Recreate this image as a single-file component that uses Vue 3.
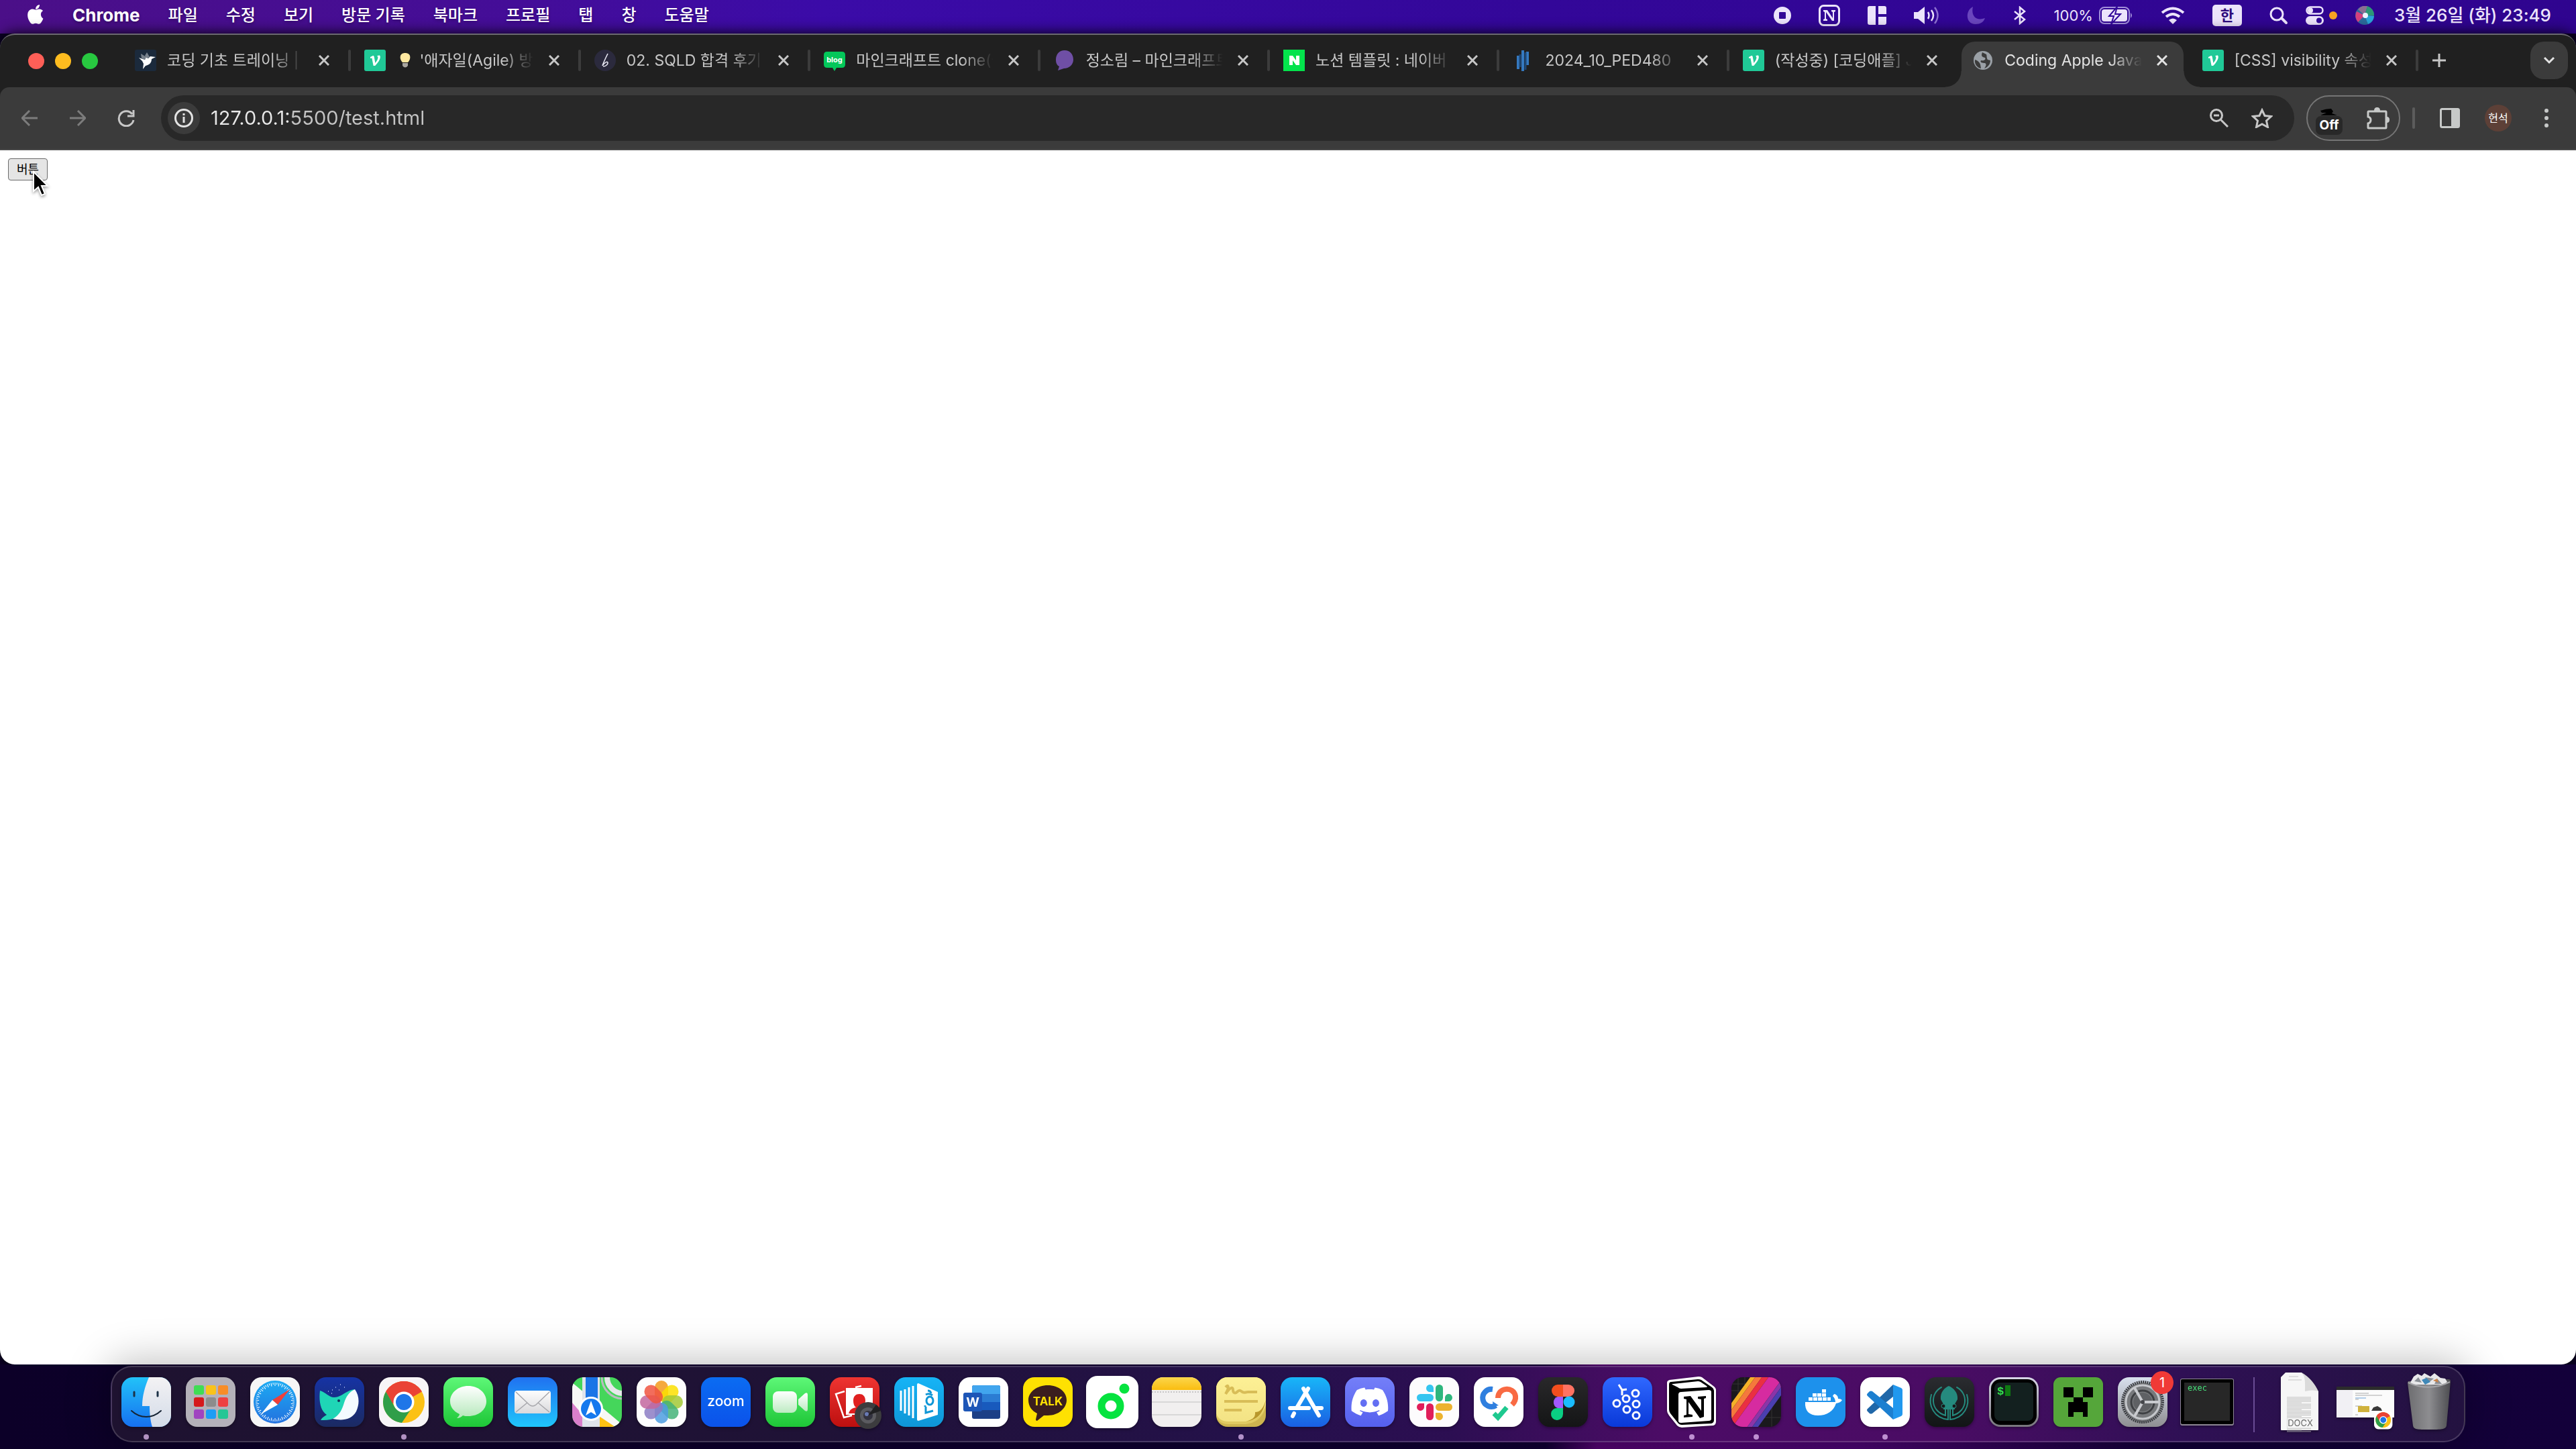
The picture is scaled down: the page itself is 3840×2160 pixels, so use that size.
<script setup>
import { ref } from 'vue'

const menus = ['파일', '수정', '보기', '방문 기록', '북마크', '프로필', '탭', '창', '도움말']

const velog = '<rect width="32" height="32" rx="3" fill="#20c997"/><path d="M9 11l4-2c1 0 1.500.6 1.800 2l1.600 9c2.600-3.500 4-6 4-8 0-1-.4-1.600-1-2.200l.2-.8 3.200-.4c.8.7 1 1.500 1 2.400 0 3.500-3.200 8.500-7.600 13h-2.600L11.400 12.500 9 13z" fill="#fff"/>'

const favicons = {
  bird: '<rect width="32" height="32" rx="3" fill="#1b2a3c"/><path d="M6 12l9 3 2-5 3 3 3-3 8 1-6 3c0 6-4 9-9 10l-4 5 1-8-2-4z" fill="#fff"/><path d="M9 6l8 5-2 4-5-2zM18 4l4 7-4 2-3-4z" fill="#77818c"/>',
  velog,
  pen: '<circle cx="16" cy="16" r="16" fill="#2b2a3d"/><path d="M20 6c-2 4-6 12-8 18M12 24c4-6 8-7 8-4 0 2-3 5-7 5" fill="none" stroke="#e7e7f2" stroke-width="1.600"/>',
  blog: '<path d="M5 3h22q5 0 5 5v14q0 5-5 5h-8l-3 5-3-5H5q-5 0-5-5V8q0-5 5-5z" fill="#03c75a"/><text x="16" y="19" text-anchor="middle" font-family="Inter, sans-serif" font-size="11" font-weight="700" fill="#fff">blog</text>',
  speech: '<path d="M16 1c8 0 13 6 13 14 0 7-6 13-14 13l-9 3 2-6C4 23 3 19 3 15 3 7 8 1 16 1z" fill="#6f4fa5"/>',
  naver: '<rect width="32" height="32" fill="#03e34c"/><path d="M9 9h5l5 7V9h5v14h-5l-5-7v7H9z" fill="#fff"/>',
  bars: '<path d="M8 9v20M15 1v31M22 3v20" stroke="#3579c0" stroke-width="4"/><path d="M11 7v19M19 4v26" stroke="#1d4674" stroke-width="3"/>',
  globe: '<circle cx="16" cy="16" r="14" fill="#9aa0a6"/><path d="M15 4c-2 5-1 7 4 8 2 3-2 5-6 4-2 3 2 4 6 4 3 2 1 5-1 8 5-2 9-6 9-12l-4-1c-2-3-1-6-2-8zM4 15c4 1 7 4 8 7l1 6C7 27 3 21 4 15z" fill="#3b3b3b"/>'
}

const tabs = [
  { icon: 'bird', title: '코딩 기초 트레이닝 | 프로그래머스' },
  { icon: 'velog', bulb: true, title: "'애자일(Agile) 방법론" },
  { icon: 'pen', title: '02. SQLD 합격 후기 모음' },
  { icon: 'blog', title: '마인크래프트 clone(클론)' },
  { icon: 'speech', title: '정소림 – 마인크래프트' },
  { icon: 'naver', title: '노션 템플릿 : 네이버 검색' },
  { icon: 'bars', title: '2024_10_PED480' },
  { icon: 'velog', title: '(작성중) [코딩애플] JS' },
  { icon: 'globe', title: 'Coding Apple JavaScript', active: true },
  { icon: 'velog', title: '[CSS] visibility 속성' }
]

const address = ref('127.0.0.1:5500/test.html')

// Standard rounded tile that most dock icons sit on.
const tile = (fill) => `<rect width="74" height="74" rx="17" fill="${fill}"/>`
const grad = (id, top, bottom) =>
  `<linearGradient id="${id}" x1="0" y1="0" x2="0" y2="1"><stop offset="0" stop-color="${top}"/><stop offset="1" stop-color="${bottom}"/></linearGradient>`
const clip = (id) => `<clipPath id="${id}"><rect width="74" height="74" rx="17"/></clipPath>`

const launchColors = ['#3fdc54', '#f9c21a', '#f88d28', '#d5191c', '#8c8c8c', '#ee4141', '#a044c0', '#1d9df5', '#25c695']
const launchpad = launchColors
  .map((c, i) => `<rect x="${12 + (i % 3) * 18}" y="${12 + Math.floor(i / 3) * 18}" width="15" height="14" rx="3" fill="${c}"/>`)
  .join('')

const ticks = Array.from({ length: 60 }, (_, i) => `<path d="M37 8v${i % 2 ? 3 : 5}" stroke="#fff" stroke-width="1" transform="rotate(${i * 6} 37 37)"/>`).join('')

const petalColors = ['#f39a1c', '#fbdf00', '#a3c936', '#44b378', '#4e9de0', '#8c7cc4', '#c3679f', '#f0533f']
const petals = petalColors
  .map((c, i) => `<rect x="27" y="5" width="20" height="31" rx="10" fill="${c}" fill-opacity=".85" transform="rotate(${i * 45} 37 37)"/>`)
  .join('')

const chromeMark = '<circle cx="37" cy="37" r="31" fill="#fbc116"/><path d="M37 37L10.200 21.500A31 31 0 0 1 63.800 21.500z" fill="#ea4335"/><path d="M37 21.500h26.800A31 31 0 0 0 10.200 21.500L20 40z" fill="#ea4335"/><path d="M10.200 21.500A31 31 0 0 0 34 67.900L50 44 37 37 23.600 44.700z" fill="#2f9e49"/><circle cx="37" cy="37" r="15.500" fill="#fff"/><circle cx="37" cy="37" r="12" fill="#1f76e8"/>'

const kafka = [[35, 32], [49, 24], [21, 39], [50, 40], [36, 48], [50, 57]]
  .map(([x, y]) => `<circle cx="${x}" cy="${y}" r="5" fill="none" stroke="#fff" stroke-width="3"/>`)
  .join('')

const gearTeeth = '<circle cx="37" cy="37" r="30" fill="none" stroke="#3a3c40" stroke-width="4" stroke-dasharray="2 1.140"/>'

const textLines = Array.from({ length: 26 }, (_, i) => `<path d="M11 ${44 + i * 3}h${i % 5 === 4 ? 22 : 36}" stroke="#b9b9b9" stroke-width="1"/>`).join('')

const apps = [
  { name: 'Finder', running: true, art: `<defs>${grad('finderL', '#22c2f8', '#1670f0')}${grad('finderR', '#f3f2f4', '#d3dbe8')}${clip('finderC')}</defs><g clip-path="url(#finderC)"><rect width="74" height="74" fill="url(#finderL)"/><path d="M41 0C35 14 31 28 31 43h11c0 10 1 22 4 31h28V0z" fill="url(#finderR)"/></g><path d="M19 22v6M54 22v6" stroke="#1d3247" stroke-width="3" stroke-linecap="round"/><path d="M15 50c13 12 31 12 44 0" fill="none" stroke="#162434" stroke-width="2" stroke-linecap="round"/>` },
  { name: 'Launchpad', art: tile('#b4b1b9') + launchpad },
  { name: 'Safari', art: `<defs>${grad('safari', '#1cabf3', '#2372df')}</defs>${tile('#f6f6f6')}<circle cx="37" cy="37" r="32" fill="url(#safari)"/>${ticks}<path d="M59 18L33 34l8 7z" fill="#ee3f3a"/><path d="M16 55l17-21 8 7z" fill="#fff"/>` },
  { name: 'Whale', art: `<defs>${grad('whale', '#1633a4', '#1b2a62')}</defs>${tile('url(#whale)')}<path d="M8 20c8 2 13 10 21 10 12 0 18-11 31-12-9 10-10 22-17 32-6 9-15 15-34 14 2-4 6-6 9-8C9 50 6 36 8 20z" fill="#1fd6b6"/><path d="M60 18c7 10 7 22 2 33-7 13-22 14-35 11 10-5 14-14 17-24 3-9 7-16 16-20z" fill="#f4fbff"/><circle cx="36" cy="35" r="2" fill="#12305c"/><path d="M26 19h1M31 15h1M38 11h1M44 15h1M20 21h1M25 24h1M36 19h1" stroke="#b9c3f5" stroke-width="1.500"/>` },
  { name: 'Chrome', running: true, art: tile('#f7f5f7') + chromeMark },
  { name: 'Messages', art: `<defs>${grad('msg', '#5df777', '#1ec637')}${grad('msgB', '#ffffff', '#b4e8ba')}</defs>${tile('url(#msg)')}<path d="M37 13c15 0 27 10 27 23S52 58 37 58c-3 0-6 0-8-1-2 2-5 4-9 4 2-2 4-4 4-6C15 51 10 44 10 36c0-13 12-23 27-23z" fill="url(#msgB)"/>` },
  { name: 'Mail', art: `<defs>${grad('mail', '#2071f0', '#20c6fb')}${grad('mailE', '#fdfdfd', '#d9d9dc')}</defs>${tile('url(#mail)')}<rect x="10" y="20" width="54" height="34" rx="4" fill="url(#mailE)"/><path d="M12 22l20 19q5 4 10 0l20-19M12 52l17-14M62 52L45 38" fill="none" stroke="#a6a6ab" stroke-width="1.500"/>` },
  { name: 'Maps', art: `<defs>${clip('mapsC')}</defs><g clip-path="url(#mapsC)"><rect width="74" height="74" fill="#45d65b"/><path d="M0 22l22 20v32H0z" fill="#d97fcb"/><path d="M0 8l74 62v14H40L0 38z" fill="#f7f7f5"/><path d="M40 58l24 16H38z" fill="#fcc112"/><circle cx="76" cy="0" r="32" fill="none" stroke="#b9bcc0" stroke-width="3"/><circle cx="76" cy="0" r="24" fill="none" stroke="#e6e8ea" stroke-width="8"/><path d="M15 0v74h26V0z" fill="#dfe3ea"/><path d="M20 0v40h18V0z" fill="#1a74e6"/></g><circle cx="28" cy="47" r="18" fill="#fff"/><circle cx="28" cy="47" r="15" fill="#1579ee"/><path d="M28 35l8 22-8-5-8 5z" fill="#fff"/>` },
  { name: 'Photos', art: tile('#fdfdfd') + petals },
  { name: 'Zoom', art: `<defs>${grad('zoom', '#0b6cf2', '#0b52ea')}</defs>${tile('url(#zoom)')}<text x="37" y="43" text-anchor="middle" font-family="Inter, sans-serif" font-size="21" font-weight="500" fill="#fff">zoom</text>` },
  { name: 'FaceTime', art: `<defs>${grad('ft', '#5df777', '#1ec637')}${grad('ftB', '#ffffff', '#bdebc2')}</defs>${tile('url(#ft)')}<rect x="11" y="21" width="36" height="32" rx="8" fill="url(#ftB)"/><path d="M49 33l10-9q4-2 4 2v22q0 4-4 2l-10-9z" fill="url(#ftB)"/>` },
  { name: 'Photo Booth', art: `<defs>${grad('pb', '#ee3431', '#bd0f0f')}</defs>${tile('url(#pb)')}<path d="M22 21L9 25l12 35 12-3M38 15l9-2" fill="none" stroke="#fff" stroke-width="2.500"/><rect x="24" y="16" width="40" height="40" fill="#fff"/><path d="M28 54c2-6 5-8 11-9-3-2-4-6-4-10 0-7 4-10 9-10s9 3 9 10c0 4-2 8-4 10 6 1 9 3 11 9z" fill="#e02020"/><circle cx="57" cy="57" r="20" fill="#3c3c3e"/><circle cx="57" cy="57" r="12" fill="#5b5b60"/><circle cx="57" cy="57" r="7" fill="#33323f"/><circle cx="55" cy="55" r="3" fill="#697ab4"/><path d="M57 57l12-16q5 3 7 9z" fill="#202022"/>` },
  { name: 'Books', art: `<defs>${grad('bk', '#16b4f6', '#0f96d6')}</defs>${tile('url(#bk)')}<path d="M10 20v30M16 18v36M22 15v42M28 13v48" stroke="#fff" stroke-width="3"/><path d="M36 9l29 13v34L36 65q-2 0-2-2V11q0-2 2-2z" fill="#fff"/><path d="M47 44v9l11-3M46 42v2" stroke="#0f96d6" stroke-width="3" fill="none"/><ellipse cx="53" cy="35" rx="5" ry="6" fill="none" stroke="#0f96d6" stroke-width="3"/><path d="M47 26q5-3 10 1M50 20q4 0 5 4" stroke="#0f96d6" stroke-width="3" fill="none"/>` },
  { name: 'Word', art: `${tile('#fff')}<rect x="20" y="12" width="42" height="50" rx="3" fill="#1c3f86"/><path d="M23 12h36q3 0 3 3v10H20V15q0-3 3-3z" fill="#41a5ee"/><path d="M20 25h42v12H20z" fill="#2b7cd3"/><path d="M20 37h42v12H20z" fill="#185abd"/><rect x="7" y="23" width="28" height="28" rx="3" fill="#1d56b7"/><text x="21" y="44" text-anchor="middle" font-family="Inter, sans-serif" font-size="19" font-weight="700" fill="#fff">W</text>` },
  { name: 'KakaoTalk', art: `${tile('#fee102')}<path d="M37 12c16 0 28 10 28 22S53 57 37 57h-6l-10 8q-2 0-2-2l2-9C13 50 8 43 8 34c0-12 13-22 29-22z" fill="#3b1e1e"/><text x="37" y="42" text-anchor="middle" font-family="Inter, sans-serif" font-size="17" font-weight="700" fill="#fee102">TALK</text>` },
  { name: 'Cloud', art: `<rect x="-2" y="-2" width="78" height="78" rx="17" fill="#fff"/><circle cx="35" cy="43" r="14" fill="none" stroke="#06e33f" stroke-width="11"/><circle cx="55" cy="17" r="7.500" fill="#06e33f"/>` },
  { name: 'Notes', art: `<defs>${clip('noteC')}${grad('noteT', '#fbd64c', '#fabd10')}</defs><g clip-path="url(#noteC)"><rect width="74" height="74" fill="#f1efef"/><rect width="74" height="19" fill="url(#noteT)"/></g><path d="M0 22h74" stroke="#9c9c9c" stroke-width="1" stroke-dasharray="2 2"/><path d="M0 37h74M0 56h74" stroke="#cfcfcf" stroke-width="1.500"/>` },
  { name: 'Stickies', running: true, art: `<defs>${clip('stC')}${grad('st', '#fdf095', '#f3e385')}</defs><g clip-path="url(#stC)"><rect width="74" height="74" fill="#cdb44f"/><path d="M0 0h74v44C68 62 58 68 44 70H18Q4 70 0 58z" fill="#e0ca62"/><path d="M0 0h74v40C68 58 58 65 44 66H18Q4 66 0 54z" fill="url(#st)"/><path d="M74 34C70 56 60 64 44 66c14-4 14-8 14-14 8 0 12-6 16-18z" fill="#b9982c"/></g><path d="M14 15c3-4 5-2 3 4l-3 6c6-9 11-12 11-6 0 4 3 6 6 3 4-4 5-2 8 0 3 2 5 0 8 0h14M12 36h50M12 49h26" fill="none" stroke="#d8bd57" stroke-width="4"/>` },
  { name: 'App Store', art: `<defs>${grad('as', '#18b6f8', '#1a5fe3')}</defs>${tile('url(#as)')}<path d="M41 17L25 44M34 17l23 40M20 54l-2 4M14 46h28M53 46h8" stroke="#fff" stroke-width="6" stroke-linecap="round"/>` },
  { name: 'Discord', art: `<defs>${grad('dc', '#747ff8', '#5560ee')}</defs>${tile('url(#dc)')}<g transform="translate(9.500 9) scale(2.280)"><path fill="#fff" d="M20.317 4.370a19.791 19.791 0 00-4.885-1.515.074.074 0 00-.079.037c-.211.375-.445.865-.608 1.250-1.845-.276-3.680-.276-5.487 0-.164-.393-.406-.874-.618-1.250a.077.077 0 00-.079-.037 19.736 19.736 0 00-4.885 1.515.070.070 0 00-.032.028C.533 9.046-.319 13.580.099 18.058a.082.082 0 00.031.056c2.053 1.508 4.041 2.423 5.993 3.029a.078.078 0 00.084-.028c.462-.630.873-1.295 1.226-1.994a.076.076 0 00-.042-.106c-.653-.248-1.274-.550-1.872-.892a.077.077 0 01-.008-.128c.126-.094.252-.192.372-.291a.074.074 0 01.078-.011c3.928 1.793 8.180 1.793 12.061 0a.074.074 0 01.079.010c.120.099.246.198.373.292a.077.077 0 01-.007.128 12.299 12.299 0 01-1.873.891.077.077 0 00-.041.107c.360.698.772 1.363 1.225 1.993a.076.076 0 00.084.029c1.961-.607 3.950-1.522 6.002-3.029a.077.077 0 00.031-.055c.500-5.177-.838-9.674-3.549-13.660a.061.061 0 00-.031-.029zM8.020 15.331c-1.183 0-2.157-1.086-2.157-2.419 0-1.333.956-2.419 2.157-2.419 1.211 0 2.176 1.095 2.157 2.419 0 1.333-.956 2.419-2.157 2.419zm7.975 0c-1.183 0-2.157-1.086-2.157-2.419 0-1.333.955-2.419 2.157-2.419 1.211 0 2.176 1.095 2.157 2.419 0 1.333-.946 2.419-2.157 2.419z"/></g>` },
  { name: 'Slack', art: `${tile('#fdfcfd')}<g fill="#36c5f0"><path d="M36 22V16a5.500 5.500 0 1 0-5.500 6z"/><rect x="11" y="25" width="25" height="11" rx="5.500"/></g><g fill="#2eb67d"><rect x="39" y="11" width="11" height="25" rx="5.500"/><path d="M53 36h5a5.500 5.500 0 1 0-5-6z"/></g><g fill="#ecb22e"><rect x="39" y="39" width="25" height="11" rx="5.500"/><path d="M39 53v5a5.500 5.500 0 1 0 6-5z"/></g><g fill="#e01e5a"><rect x="25" y="39" width="11" height="25" rx="5.500"/><path d="M22 39h-6a5.500 5.500 0 1 0 6 6z"/></g>` },
  { name: 'Checks', art: `${tile('#fff')}<path d="M28 18a13 13 0 1 0 5 24" fill="none" stroke="#2f7fdf" stroke-width="8"/><path d="M37 42l-9-6 1 8z" fill="#2f7fdf"/><path d="M36 31c0-16 23-18 26-3q1 7-5 13" fill="none" stroke="#f96a43" stroke-width="8"/><path d="M30 54l6 6 13-15" fill="none" stroke="#1ec98f" stroke-width="7"/>` },
  { name: 'Figma', art: `<defs>${grad('fg', '#29282a', '#141516')}</defs>${tile('url(#fg)')}<path d="M37 11h-8a9 9 0 0 0 0 18h8z" fill="#f24e1e"/><path d="M37 11h8a9 9 0 0 1 0 18h-8z" fill="#ff7262"/><path d="M37 29h-8a9 9 0 0 0 0 17h8z" fill="#a259ff"/><circle cx="46" cy="37" r="8.500" fill="#1abcfe"/><path d="M29 46a9 9 0 1 0 8 9v-9z" fill="#0acf83"/>` },
  { name: 'Cluster', art: `<defs>${grad('kf', '#2f68ff', '#0938d8')}</defs>${tile('url(#kf)')}${kafka}<path d="M24 11l5 8 7-1M29 19v8" fill="none" stroke="#fff" stroke-width="3" stroke-linejoin="round"/>` },
  { name: 'Notion', running: true, art: `<path d="M4 4L47-1q3 0 5 1l17 13q4 3 4 6v47q0 5-4 6l-47 3q-4 0-7-3L3 57q-3-4-3-7V8q0-3 4-4z" fill="#fff"/><path d="M6 7l40-4q3 0 5 1l16 11q3 2 3 5v44q0 4-4 5l-44 2q-3 0-5-2L5 54q-2-3-2-6V11q0-4 3-4z" fill="#000"/><path d="M9 10l37-4q2 0 4 1l9 6q2 2-1 2l-37 2q-3 0-5-2l-8-4q-2-1 1-1zM21 22l41-3q4 0 4 3v40q0 3-4 3l-41 3q-4 0-4-3V26q0-4 4-4z" fill="#fff"/><path d="M25 29l10-1 16 22V33l-5-1v-3l12-1v3l-3 1v27l-6 2-17-24v18l6 1v3l-13 1v-3l4-1V33l-4-1z" fill="#000"/>` },
  { name: 'Stripes', running: true, art: `<defs>${clip('lnC')}</defs><g clip-path="url(#lnC)"><rect width="74" height="74" fill="#1a191c"/><path d="M0 10h74M0 20h74M0 60h74M10 0v74M20 0v74M60 0v74" stroke="#333" stroke-width="1"/><g transform="rotate(36 37 37)"><path d="M8-30h6v140H8z" fill="#f5b128"/><path d="M14-30h8v140h-8z" fill="#f5793c"/><path d="M22-30h8v140h-8z" fill="#ea2f42"/><path d="M30-30h18v140H30z" fill="#d62ba0"/><path d="M48-30h6v140h-6z" fill="#8a35a8"/><path d="M54-30h7v140h-7z" fill="#4a3fb0"/></g></g>` },
  { name: 'Docker', art: `${tile('#1d91ec')}<path d="M14 37h45c0-4-2-7-4-9 1-2 2-3 3-3 4 2 5 4 5 7q4 0 6 2-2 4-9 5c-4 12-14 18-27 18C20 57 13 50 14 37z" fill="#fff"/><path d="M19 30h6v5h-6zM26 30h6v5h-6zM33 30h6v5h-6zM40 30h6v5h-6zM25 24h6v5h-6zM32 24h6v5h-6zM39 24h6v5h-6zM39 18h6v5h-6zM47 30h5v5h-5z" fill="#fff"/>` },
  { name: 'Code', running: true, art: `${tile('#fff')}<path d="M49 11L11 47q-2 2 0 4l3 3q2 1 4 0l31-25z" fill="#2067a8"/><path d="M49 63L11 28q-2-2 0-4l3-3q2-1 4 0l31 25z" fill="#1c7fd0"/><path d="M49 11l12 5q2 1 2 3v36q0 2-2 3l-12 5z" fill="#2198ee"/>` },
  { name: 'Kraken', art: `<defs>${grad('gk', '#2a2c30', '#121516')}</defs>${tile('url(#gk)')}<g fill="none" stroke="#258a7e" stroke-width="2" stroke-linecap="round"><path d="M25 15C8 24 8 50 31 57V48"/><path d="M48 15c17 9 17 35-6 42v-9"/><path d="M10 26C5 42 14 61 35 63V48M63 26c5 16-4 35-25 37V48"/></g><path d="M36 13c7 3 14 10 13 20l-4 7v8H28v-8l-4-7c-1-10 5-17 12-20z" fill="#258a7e"/><circle cx="28" cy="43" r="3" fill="#161a1b" stroke="#258a7e"/><circle cx="44" cy="43" r="3" fill="#161a1b" stroke="#258a7e"/>` },
  { name: 'iTerm', art: `<defs>${grad('it', '#d8d6e8', '#77757c')}</defs>${tile('url(#it)')}<rect x="3" y="3" width="68" height="68" rx="14" fill="#000"/><rect x="8" y="8" width="58" height="57" rx="8" fill="#13201f"/><text x="12" y="26" font-family="'Liberation Mono', monospace" font-size="17" font-weight="700" fill="#33e04d">$</text><path d="M24 12h8v16h-8z" fill="#0f7a12"/>` },
  { name: 'Minecraft', art: `<rect width="74" height="74" rx="11" fill="#55a63a"/><path d="M15 15h15v15H15zM44 15h15v15H44zM30 30h14v7h7v22h-7v-7H30v7h-8V37h8z" fill="#000"/>` },
  { name: 'Settings', badge: '1', art: `<defs>${grad('se', '#d8e0ee', '#8f8f92')}</defs>${tile('url(#se)')}<circle cx="37" cy="37" r="29" fill="#77797c"/>${gearTeeth}<circle cx="37" cy="37" r="25" fill="none" stroke="#c5c7cb" stroke-width="3"/><circle cx="37" cy="37" r="17" fill="none" stroke="#3e4043" stroke-width="3"/><circle cx="37" cy="37" r="14" fill="#5f6164"/><path d="M37 37h24M37 37L25 16M37 37L25 58" stroke="#c9cbcf" stroke-width="4"/><circle cx="37" cy="37" r="3" fill="#44464a"/>` },
  { name: 'exec', art: `<rect x="-3" y="2" width="80" height="70" rx="3" fill="#8d8794"/><rect x="-2" y="3" width="78" height="67" rx="2" fill="#000"/><rect x="3" y="8" width="68" height="57" fill="#272727"/><text x="8" y="20" font-family="'DejaVu Sans Mono', monospace" font-size="12" fill="#46e07a">exec</text>` }
]

const files = [
  { name: 'Document', art: `<path d="M14-7h24l25 28v57q0 1-1 1H8q-1 0-1-1V0z" fill="#f6f6f6"/><path d="M19-1h14M18 4h20" stroke="#c6c6c6" stroke-width="1"/><g transform="translate(5 0) scale(1 .68)">${textLines}</g><path d="M38-7c6 6 5 16 5 28q12-3 20 0C58 10 50 0 38-7z" fill="#dadada"/><path d="M17 61h38v14H17z" fill="#f6f6f6"/><text x="36" y="73" text-anchor="middle" font-family="Inter, sans-serif" font-size="13" fill="#666">DOCX</text>` },
  { name: 'Window', art: `<rect x="-6" y="14" width="86" height="46" fill="#fbfbfb"/><rect x="-6" y="14" width="86" height="5" fill="#2c2c2c"/><rect x="-6" y="19" width="24" height="41" fill="#f1f0f4"/><path d="M22 24h20M22 27h40M22 33h5M22 43h10M22 56h4" stroke="#a9a9a9" stroke-width="1"/><path d="M22 31h16" stroke="#69a0d6" stroke-width="1"/><rect x="26" y="43" width="17" height="9" fill="#cfb13c"/><path d="M46 50l3-5 6-2 5 3 2 4z" fill="#3a3a3a"/><g transform="translate(50 50) scale(.370)">${tile('#fff')}${chromeMark}</g>` },
  { name: 'Trash', art: `<defs><linearGradient id="tr"><stop offset="0" stop-color="#6d6d70"/><stop offset=".5" stop-color="#8d8d90"/><stop offset="1" stop-color="#4c4c50"/></linearGradient></defs><path d="M5 6l60-3q3 0 3 3l-6 66c-1 6-8 6-26 6s-23 0-24-6L4 8z" fill="url(#tr)"/><path d="M8 8l5-9 6-4 6 3 4-4 9 5 6-5 9 7 7 1 3 5-5 4H12z" fill="#e8e8ea"/><path d="M14 6l6-6 5 8zM30 0l5 8 8-6zM48 2l-4 8 11 0z" fill="#8a8f96"/><path d="M25 4l7-3 6 6-8 4z" fill="#3f88b8"/><path d="M42 5l6-3 2 6z" fill="#c98248"/><path d="M5 8q31 14 62-1" fill="none" stroke="#a5a5a8" stroke-width="2"/>` }
]
</script>

<template>
  <div class="desktop">
    <header class="menubar">
      <svg class="apple" viewBox="0 0 170 200" aria-hidden="true">
        <path fill="#fff" d="M150 130c-4 10-6 14-11 23-7 12-17 27-30 27-11 0-14-7-29-7s-18 7-29 7c-13 0-22-13-29-25C2 121 0 82 13 62c9-14 23-22 36-22 14 0 22 7 33 7 11 0 17-7 33-7 12 0 24 6 33 17-29 16-24 57 2 73zM107 29c6-8 11-18 9-29-9 1-20 6-27 14-6 7-11 18-9 28 10 0 21-5 27-13z" />
      </svg>
      <nav class="menus">
        <strong>Chrome</strong>
        <span v-for="m in menus" :key="m">{{ m }}</span>
      </nav>
      <div class="status">
        <svg width="26" height="28" viewBox="0 0 26 28"><path fill-rule="evenodd" fill="#ece4fb" d="M13 1a13 13 0 1 1 0 26 13 13 0 0 1 0-26zM9 9q-1 0-1 1v8q0 1 1 1h8q1 0 1-1v-8q0-1-1-1z" /></svg>
        <svg width="32" height="34" viewBox="0 0 32 34"><rect x="1.500" y="2.500" width="29" height="29" rx="6" fill="none" stroke="#ece4fb" stroke-width="3" /><path fill="#ece4fb" d="M7 9h6l8 12v-9l-2-1V9h6v2l-2 1v13h-3l-9-13v10l2 1v2H7v-2l2-1V12l-2-1z" /></svg>
        <svg width="28" height="30" viewBox="0 0 28 30"><path fill="#ece4fb" d="M3 1h9v28H3q-3 0-3-3V4q0-3 3-3zM16 1h9q3 0 3 3v9H16zM16 17h12v9q0 3-3 3h-9z" /></svg>
        <svg width="38" height="28" viewBox="0 0 38 28"><path fill="#ece4fb" d="M0 9h6l10-8v26L6 19H0z" /><path fill="none" stroke="#ece4fb" stroke-width="2.500" d="M21 9q3 5 0 10M26 6q6 8 0 16" /><path fill="none" stroke="#8d6fd0" stroke-width="2.500" d="M31 2q9 12 0 24" /></svg>
        <svg width="28" height="28" viewBox="0 0 28 28"><path fill="#6a46bd" d="M9 1C-3 7-2 27 13 27c7 0 12-3 14-9C13 23 6 14 9 1z" /></svg>
        <svg width="20" height="28" viewBox="0 0 20 28"><path fill="none" stroke="#ece4fb" stroke-width="2.500" d="M2 8l15 12-7 6V2l7 6L2 20" /></svg>
        <div class="battery">
          <span>100%</span>
          <svg width="51" height="26" viewBox="0 0 51 26"><rect x="1" y="1" width="44" height="24" rx="7" fill="none" stroke="#a28fda" stroke-width="2" /><path d="M47 9q4 4 0 8z" fill="#a28fda" /><rect x="4" y="4" width="38" height="18" rx="4" fill="#ece4fb" /><path d="M27 0L15 14h7l-4 12 14-15h-8z" fill="#ece4fb" stroke="#310799" stroke-width="2" /></svg>
        </div>
        <svg width="36" height="26" viewBox="0 0 36 26"><path fill="none" stroke="#ece4fb" stroke-width="4" d="M2 9q16-13 32 0M8 15q10-8 20 0" /><path fill="#ece4fb" d="M12 20q6-5 12 0l-6 6z" /></svg>
        <span class="ime">한</span>
        <div class="cluster">
          <svg width="28" height="28" viewBox="0 0 28 28"><circle cx="11" cy="12" r="9" fill="none" stroke="#ece4fb" stroke-width="3" /><path d="M18 18l7 7" stroke="#ece4fb" stroke-width="4" stroke-linecap="round" /></svg>
          <svg width="48" height="28" viewBox="0 0 48 28"><rect x="1.500" y="1.500" width="24" height="10" rx="5" fill="none" stroke="#ece4fb" stroke-width="2.500" /><circle cx="7" cy="6.500" r="4" fill="#ece4fb" /><rect y="15" width="27" height="13" rx="6.500" fill="#ece4fb" /><circle cx="20" cy="21.500" r="4" fill="#310799" /><circle cx="41" cy="14" r="6" fill="#f7a321" /></svg>
          <svg width="28" height="28" viewBox="0 0 28 28"><circle cx="14" cy="14" r="14" fill="#2b6a9b" /><path d="M14 14L2 8a14 14 0 0 0 2 16z" fill="#d4407e" /><path d="M14 14L4 5a14 14 0 0 1 14-5z" fill="#8b6d92" /><path d="M14 14l4-14a14 14 0 0 1 10 14z" fill="#2c9776" /><path d="M14 14l14 1a14 14 0 0 1-9 12z" fill="#2aa3d8" /><circle cx="15" cy="14" r="4" fill="#eef4ff" /></svg>
          <time>3월 26일 (화) 23:49</time>
        </div>
      </div>
    </header>

    <main class="window">
      <div class="strip">
        <div class="lights">
          <button class="red" aria-label="닫기"></button>
          <button class="amber" aria-label="최소화"></button>
          <button class="green" aria-label="확대"></button>
        </div>
        <div class="tabs" role="tablist">
          <div v-for="(t, i) in tabs" :key="i" class="tab" :class="{ active: t.active, plain: tabs[i + 1]?.active }" role="tab" :aria-selected="!!t.active">
            <svg class="favicon" viewBox="0 0 32 32" v-html="favicons[t.icon]"></svg>
            <span class="title">
              <svg v-if="t.bulb" class="bulb" width="26" height="24" viewBox="0 0 26 24"><path d="M13 1c9 0 9 9 4 14H9C4 10 4 1 13 1z" fill="#ffe9a0" /><path d="M9 16h8v4q-4 5-8 0z" fill="#a9a6a0" /></svg>{{ t.title }}</span>
            <button class="close" aria-label="탭 닫기">
              <svg width="16" height="16" viewBox="0 0 16 16"><path d="M1 1l14 14M15 1L1 15" stroke="currentColor" stroke-width="3" /></svg>
            </button>
          </div>
        </div>
        <button class="new-tab" aria-label="새 탭">
          <svg width="20" height="20" viewBox="0 0 20 20"><path d="M10 0v20M0 10h20" stroke="#c7c7c7" stroke-width="3" /></svg>
        </button>
        <button class="tab-search" aria-label="탭 검색">
          <svg width="18" height="12" viewBox="0 0 18 12"><path d="M2 2l7 7 7-7" fill="none" stroke="#e3e3e3" stroke-width="3" /></svg>
        </button>
      </div>

      <div class="toolbar">
        <button class="slot" aria-label="뒤로"><svg width="24" height="24" viewBox="0 0 24 24"><path d="M24 12H2M12 1L1 12l11 11" fill="none" stroke="#7c7c7c" stroke-width="3" /></svg></button>
        <button class="slot" aria-label="앞으로"><svg width="24" height="24" viewBox="0 0 24 24"><path d="M0 12h22M12 1l11 11-11 11" fill="none" stroke="#7c7c7c" stroke-width="3" /></svg></button>
        <button class="slot" aria-label="새로고침"><svg width="26" height="26" viewBox="0 0 26 26"><path d="M22 7a11 11 0 1 0 2 9M24 1v9h-9" fill="none" stroke="#c7c7c7" stroke-width="3" /></svg></button>
        <div class="omnibox">
          <button class="info" aria-label="사이트 정보">
            <svg width="28" height="28" viewBox="0 0 28 28"><circle cx="14" cy="14" r="12.500" fill="none" stroke="#e3e3e3" stroke-width="3" /><path d="M14 12v9M14 7v3" stroke="#e3e3e3" stroke-width="3" /></svg>
          </button>
          <input v-model="address" class="address" type="text" aria-label="주소창" />
          <button class="mini" aria-label="축소"><svg width="28" height="28" viewBox="0 0 28 28"><circle cx="10" cy="10" r="8.500" fill="none" stroke="#c7c7c7" stroke-width="3" /><path d="M6 10h8M16 16l11 11" stroke="#c7c7c7" stroke-width="3" /></svg></button>
          <button class="mini" aria-label="북마크"><svg width="32" height="30" viewBox="0 0 32 30"><path d="M16 3l4 8.500 9.500 1-7 6.500 2 9.500L16 24l-8.500 4.500 2-9.500-7-6.500 9.500-1z" fill="none" stroke="#c7c7c7" stroke-width="3" /></svg></button>
        </div>
        <div class="extensions">
          <button class="ext" aria-label="Off">
            <svg class="scribble" width="28" height="12" viewBox="0 0 28 12"><path d="M1 4q8-3 16-3l3 4-2 3 8 3H1l9-4H3z" fill="#000" /></svg>
            <span class="off">Off</span>
          </button>
          <button class="ext" aria-label="확장 프로그램">
            <svg width="34" height="34" viewBox="0 0 34 34"><path d="M3 7h25q1 0 1 1v23q0 1-1 1H3q-1 0-1-1v-6q4-1 4-5t-4-5V8q0-1 1-1z" fill="none" stroke="#c7c9c8" stroke-width="3" /><path d="M11 6q0-5 4.500-5T20 6zM30 15q4 0 4 4.500T30 24z" fill="#c7c9c8" /></svg>
          </button>
        </div>
        <i class="divider"></i>
        <button class="slot" aria-label="측면 패널"><svg width="30" height="30" viewBox="0 0 30 30"><rect x="1.500" y="1.500" width="27" height="27" rx="2" fill="none" stroke="#c7c9c8" stroke-width="3" /><path d="M17 1h12v28H17z" fill="#c7c9c8" /></svg></button>
        <button class="slot" aria-label="프로필"><span class="avatar">현석</span></button>
        <button class="slot" aria-label="메뉴"><svg width="6" height="28" viewBox="0 0 6 28"><path d="M3 3h0M3 14h0M3 25h0" stroke="#c7c9c8" stroke-width="6" stroke-linecap="round" /></svg></button>
      </div>

      <section class="page">
        <button class="test">버튼</button>
        <svg class="cursor" width="26" height="42" viewBox="0 0 26 42"><path d="M2 2v29l7-6 5 12 5-2-5-12h9z" fill="#000" stroke="#fff" stroke-width="2" /></svg>
      </section>
    </main>

    <footer class="shelf">
      <div class="dock">
        <button v-for="a in apps" :key="a.name" class="app" :aria-label="a.name">
          <svg class="art" viewBox="0 0 74 74" v-html="a.art"></svg>
          <span v-if="a.badge" class="badge">{{ a.badge }}</span>
          <i v-if="a.running" class="running"></i>
        </button>
        <i class="rule"></i>
        <button v-for="f in files" :key="f.name" class="app" :aria-label="f.name">
          <svg class="art" viewBox="0 0 74 74" v-html="f.art"></svg>
        </button>
      </div>
    </footer>
  </div>
</template>

<style>
body {
  margin: 0;
  background: #0c0028;
}
</style>

<style scoped>
.desktop {
  display: flex;
  flex-direction: column;
  min-height: 100vh;
  overflow: hidden;
  font-family: Inter, 'Noto Sans CJK KR', sans-serif;
  background: #0c0028;
}

button {
  margin: 0;
  padding: 0;
  border: 0;
  background: none;
  color: inherit;
  font-family: inherit;
}

svg {
  display: block;
  flex: none;
}

/* Menu bar */
.menubar {
  display: flex;
  align-items: center;
  height: 50px;
  padding: 0 37px 4px 40px;
  box-sizing: border-box;
  background: linear-gradient(90deg, #4b0f88 0%, #440d98 20%, #3b0ba8 32%, #330799 60%, #2f048f 100%);
  color: #fff;
  font-size: 24px;
  line-height: 36px;
  white-space: nowrap;
}

.apple {
  width: 28px;
  height: 32px;
}

.menus {
  display: flex;
  gap: 42px;
  margin-left: 40px;
  text-shadow: 0 2px 4px rgba(0, 0, 0, 0.3);
}

.menus span {
  font-weight: 500;
}

.menus strong {
  font-size: 26px;
  font-weight: 700;
}

.status {
  display: flex;
  align-items: center;
  gap: 41px;
  margin-left: auto;
  color: #ece4fb;
}

.battery {
  display: flex;
  align-items: center;
  gap: 9px;
  font-size: 22px;
}

.cluster {
  display: flex;
  align-items: center;
  gap: 26px;
}

.cluster time {
  margin-left: 4px;
  font-size: 26px;
  font-weight: 500;
}

.ime {
  width: 44px;
  height: 32px;
  border-radius: 5px;
  background: #ece4fb;
  color: #2e0a7c;
  font-size: 22px;
  font-weight: 700;
  line-height: 32px;
  text-align: center;
}

/* Browser window */
.window {
  display: flex;
  flex: 1;
  flex-direction: column;
  overflow: hidden;
  border-top: 2px solid #6b6970;
  border-radius: 22px;
  background: #202020;
  box-shadow: 0 0 20px #000;
}

.strip {
  display: flex;
  align-items: flex-start;
  height: 78px;
  padding: 10px 12px 0 42px;
  box-sizing: border-box;
}

.lights {
  display: flex;
  gap: 16px;
  align-items: center;
  height: 58px;
  margin-right: 35px;
}

.lights button {
  width: 24px;
  height: 24px;
  border-radius: 50%;
}

.red {
  background: #ff5f57;
}

.amber {
  background: #febc1f;
}

.green {
  background: #28c840;
}

.tabs {
  display: flex;
  flex: 1;
  min-width: 0;
}

.tab {
  position: relative;
  display: flex;
  flex: 1 1 100px;
  align-items: center;
  min-width: 0;
  height: 56px;
  padding: 0 32px 0 20px;
  box-sizing: border-box;
  color: #c7c7c7;
}

.tab::after {
  content: '';
  position: absolute;
  right: 0;
  width: 4px;
  height: 32px;
  border-radius: 2px;
  background: #3c3c3c;
}

.tab.plain::after {
  display: none;
}

.tab.active {
  flex-basis: 88px;
  height: 68px;
  margin: 0 8px 0 4px;
  padding: 0 24px 12px 16px;
  border-radius: 20px 20px 0 0;
  background: #3b3b3b;
  color: #e3e3e3;
}

.tab.active::before,
.tab.active::after {
  content: '';
  position: absolute;
  bottom: 0;
  width: 24px;
  height: 24px;
  border-radius: 0;
}

.tab.active::before {
  left: -24px;
  background: radial-gradient(circle at 0 0, transparent 23px, #3b3b3b 24px);
}

.tab.active::after {
  right: -24px;
  background: radial-gradient(circle at 100% 0, transparent 23px, #3b3b3b 24px);
}

.favicon {
  width: 32px;
  height: 32px;
}

.title {
  flex: 1;
  min-width: 0;
  margin: 0 22px 0 16px;
  overflow: hidden;
  font-size: 23px;
  line-height: 32px;
  white-space: nowrap;
  -webkit-mask-image: linear-gradient(90deg, #000 calc(100% - 48px), transparent);
  mask-image: linear-gradient(90deg, #000 calc(100% - 48px), transparent);
}

.bulb {
  display: inline-block;
  margin-right: 8px;
  vertical-align: -4px;
}

.new-tab {
  display: flex;
  align-items: center;
  justify-content: center;
  width: 62px;
  height: 56px;
}

.tab-search {
  display: flex;
  align-items: center;
  justify-content: center;
  width: 56px;
  height: 56px;
  margin-left: 105px;
  border-radius: 20px;
  background: #3b3b3b;
}

.toolbar {
  display: flex;
  gap: 16px;
  align-items: center;
  padding: 12px 16px;
  border-bottom: 2px solid #4a4a4a;
  border-radius: 14px 14px 0 0;
  background: #3b3b3b;
}

.slot {
  display: flex;
  align-items: center;
  justify-content: center;
  width: 56px;
  height: 56px;
}

.omnibox {
  display: flex;
  flex: 1;
  align-items: center;
  height: 68px;
  margin-left: 8px;
  padding: 0 32px 0 10px;
  box-sizing: border-box;
  border-radius: 34px;
  background: #282828;
}

.info {
  display: flex;
  align-items: center;
  justify-content: center;
  width: 48px;
  height: 48px;
  border-radius: 50%;
  background: #3b3b3b;
}

.address {
  flex: 1;
  min-width: 0;
  margin: 0 16px;
  padding: 0;
  border: 0;
  outline: 0;
  background: linear-gradient(90deg, #e8e8e8 119px, #c4c4c4 119px);
  -webkit-background-clip: text;
  background-clip: text;
  color: transparent;
  font-family: inherit;
  font-size: 29px;
  line-height: 40px;
}

.mini {
  margin-left: 34px;
}

.extensions {
  display: flex;
  align-items: center;
  justify-content: space-between;
  width: 140px;
  height: 68px;
  margin: 0 2px;
  padding: 0 12px;
  box-sizing: border-box;
  border: 2px solid #757575;
  border-radius: 34px;
}

.ext {
  display: flex;
  flex-direction: column;
  align-items: center;
  min-width: 38px;
}

.scribble {
  margin-top: 10px;
}

.off {
  width: 40px;
  border-radius: 8px;
  background: #282828;
  color: #fff;
  font-size: 19px;
  font-weight: 700;
  line-height: 28px;
}

.divider {
  width: 4px;
  height: 32px;
  margin-right: 8px;
  border-radius: 2px;
  background: #5c5c5c;
}

.avatar {
  width: 40px;
  height: 40px;
  border-radius: 50%;
  background: #5d4037;
  color: #fff;
  font-size: 16px;
  line-height: 40px;
}

.page {
  position: relative;
  flex: 1;
  padding: 12px;
  background: #fff;
}

.test {
  display: block;
  width: 59px;
  height: 33px;
  border: 1px solid #6b6b6b;
  border-radius: 4px;
  background: #e5e5e5;
  color: #000;
  font-size: 18px;
  line-height: 28px;
}

.cursor {
  position: absolute;
  top: 30px;
  left: 48px;
  filter: drop-shadow(0 2px 2px rgba(0, 0, 0, 0.4));
}

/* Dock */
.shelf {
  display: flex;
  justify-content: center;
  padding: 2px 0 10px;
  background:
    linear-gradient(90deg, transparent 60%, #52046f 62%, #4a0570 72%, transparent 84%),
    linear-gradient(90deg, #0c0028, #13003a);
}

.dock {
  position: relative;
  display: flex;
  gap: 22px;
  height: 114px;
  padding: 15px 14px 0;
  box-sizing: border-box;
  border: 2px solid rgba(255, 255, 255, 0.17);
  border-radius: 32px;
  background: linear-gradient(90deg, #1e1230 0%, #1f1236 30%, #24114a 48%, #2c0e52 57%, #4c0c66 66%, #4a0c64 78%, #2f1055 88%, #231240 100%);
  box-shadow: 0 0 60px 8px rgba(0, 0, 0, 0.25);
}

.app {
  position: relative;
  display: flex;
  flex-direction: column;
  align-items: center;
  width: 74px;
}

.art {
  width: 74px;
  height: 74px;
  overflow: visible;
  filter: drop-shadow(0 2px 2px rgba(0, 0, 0, 0.35));
}

.running {
  width: 8px;
  height: 8px;
  margin-top: 11px;
  border-radius: 50%;
  background: rgba(240, 200, 255, 0.7);
}

.badge {
  position: absolute;
  top: -9px;
  right: -9px;
  width: 34px;
  height: 34px;
  border-radius: 50%;
  background: #f03a37;
  color: #fff;
  font-size: 20px;
  line-height: 34px;
}

.rule {
  width: 2px;
  height: 82px;
  margin: 0 10px;
  background: #6a4c94;
}
</style>
